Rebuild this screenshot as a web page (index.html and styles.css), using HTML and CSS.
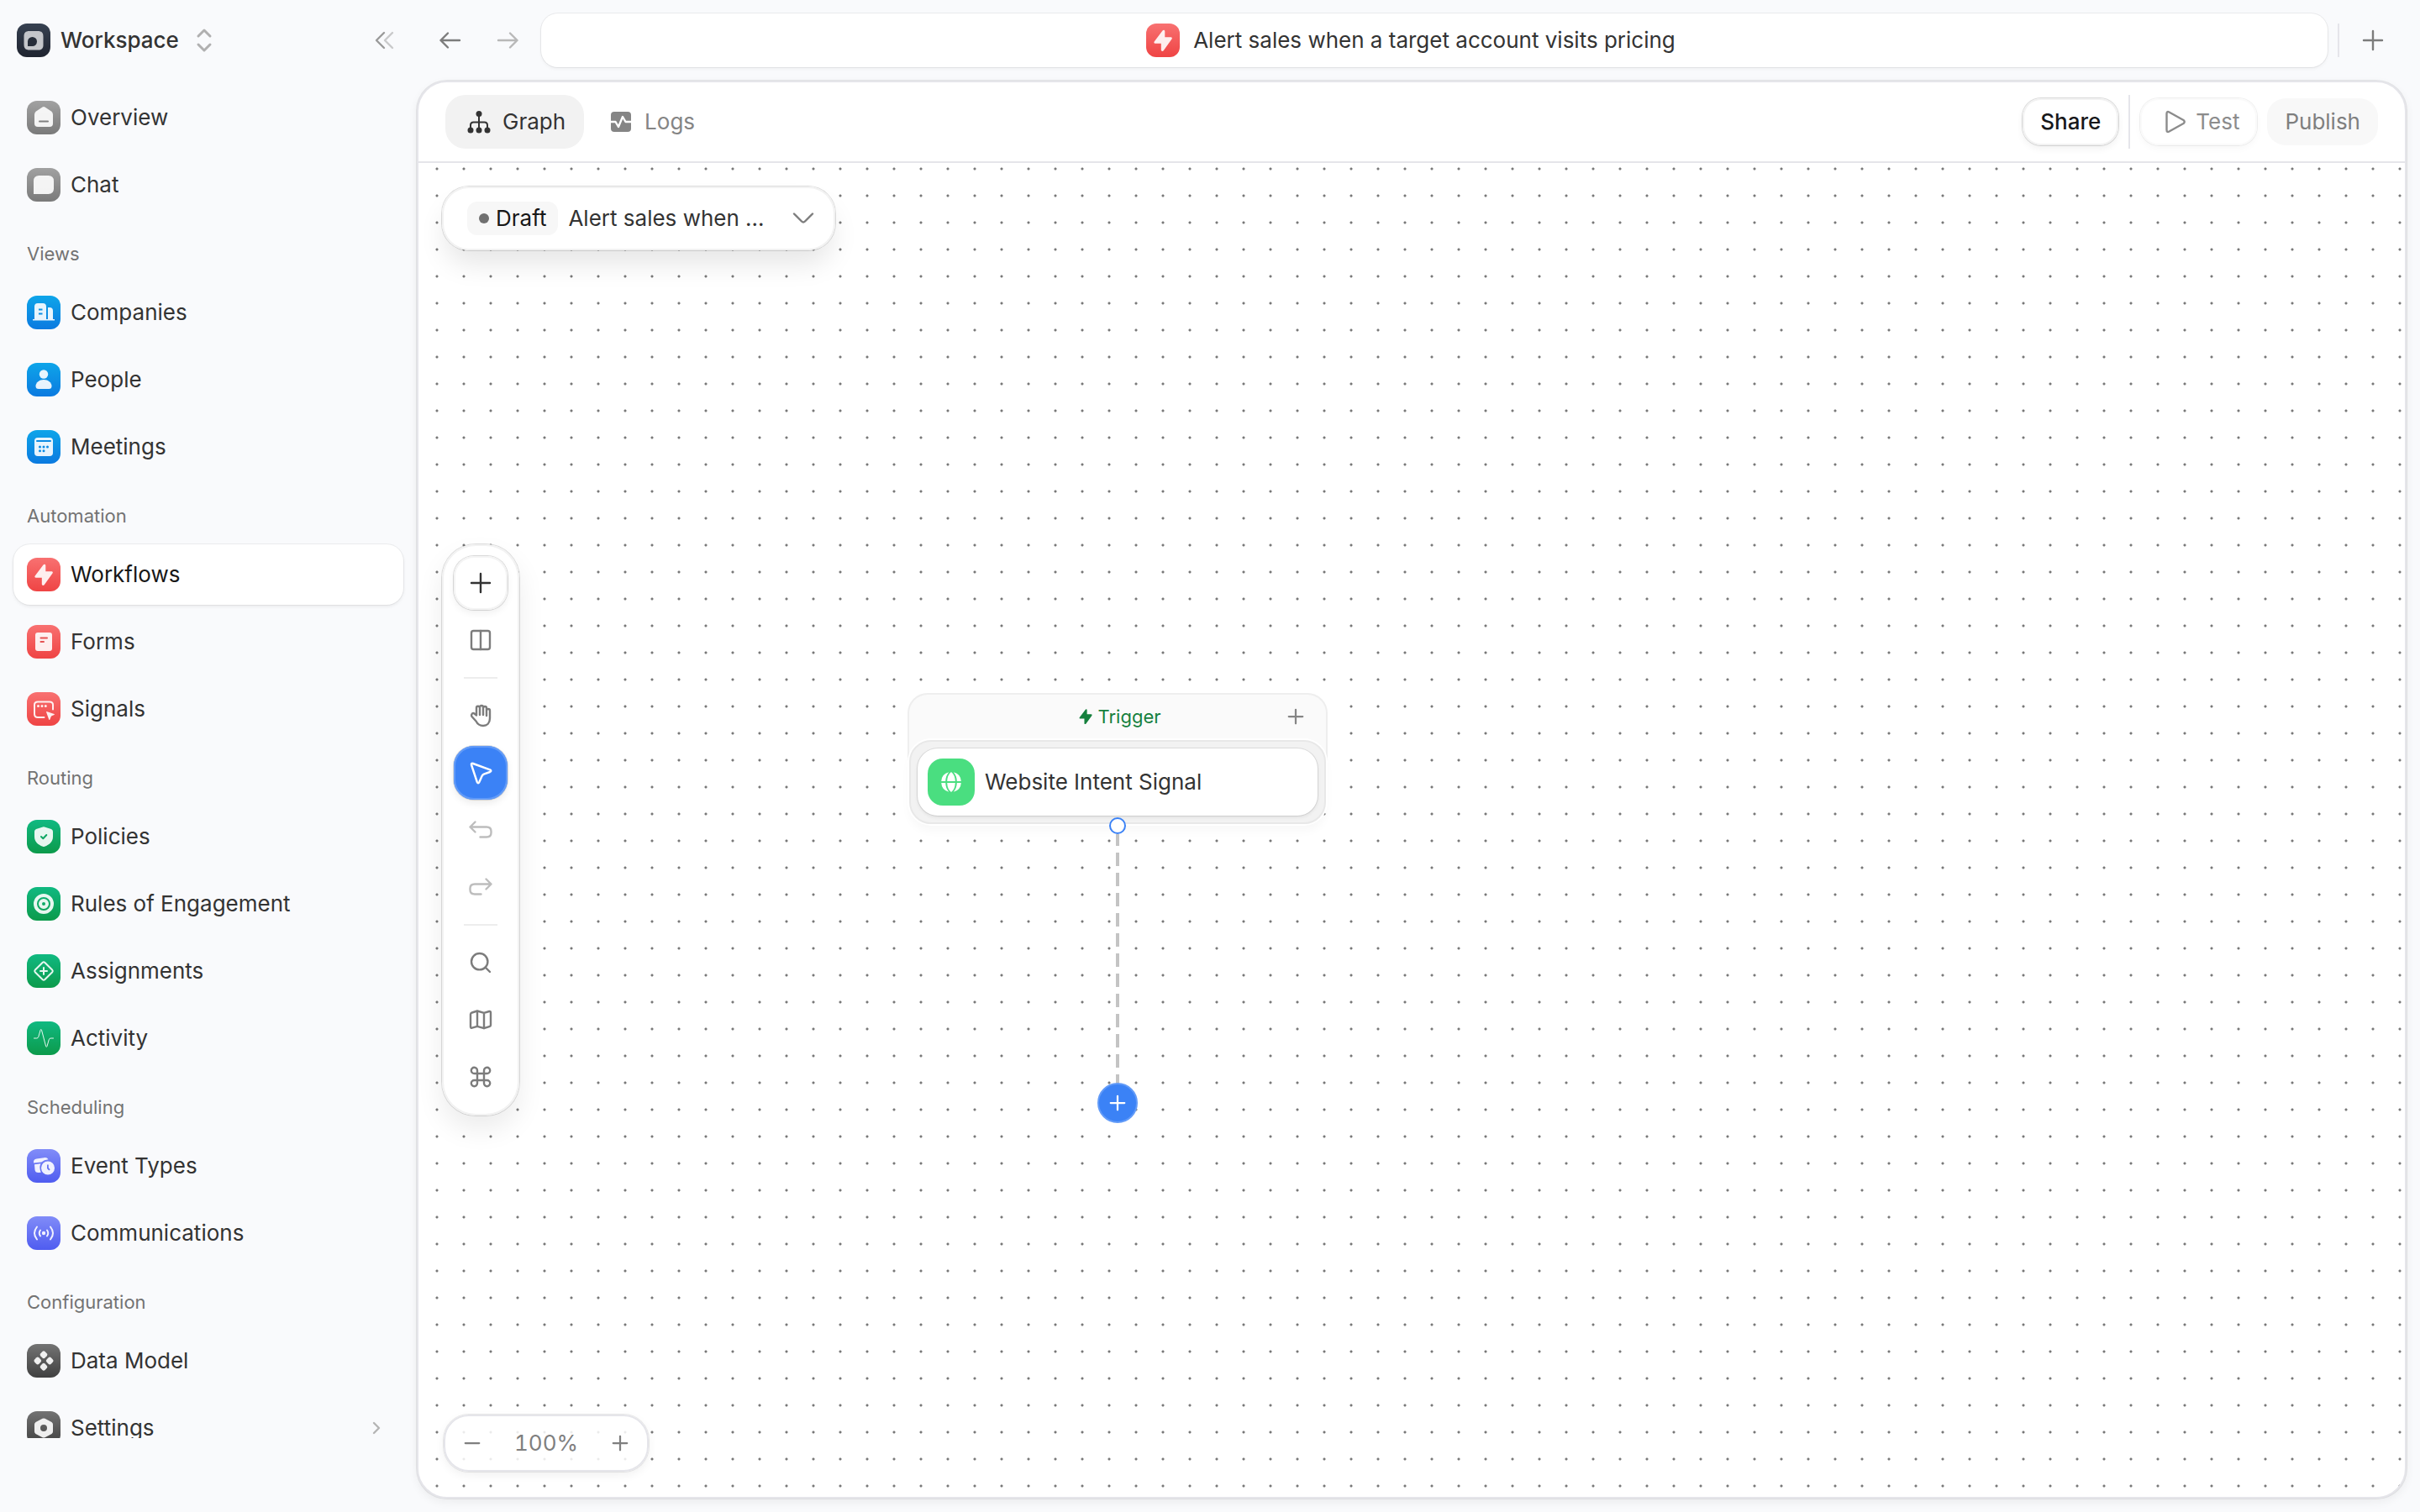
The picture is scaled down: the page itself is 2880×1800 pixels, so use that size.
FILE: index.html
```
<!DOCTYPE html>
<html lang="en">
<head>
<meta charset="UTF-8">
<meta name="viewport" content="width=device-width, initial-scale=1.0">
<title>Alert sales when a target account visits pricing</title>
<link rel="stylesheet" href="styles.css">
</head>
<body>
<svg class="sprite" aria-hidden="true">
  <symbol id="bolt" viewBox="0 0 40 40"><path d="M19.5 8.5 9.7 21.4c-.8 1.1-.2 2.3 1 2.3h7.1v7.6c0 1.8 1.9 2.3 2.9 1L30.500 18.600c.8-1.100.2-2.400-1-2.400h-7.200V9.400c0-1.900-1.800-2.300-2.800-.9z"/></symbol>
  <symbol id="plus" viewBox="0 0 32 32"><path d="M16 5v22M5 16h22"/></symbol>
</svg>

<div class="app">
  <aside class="sidebar">
    <div class="workspace">
      <button class="workspace-switch">
        <svg class="tile dark" viewBox="0 0 40 40"><path class="logo-face" d="M15 9h10c4.500 0 6.500 2 6.500 6.500v10c0 4-2 6-6 6H15c-4.500 0-6.500-2-6.500-6.500V15c0-4 2-6 6.500-6z"/><path class="logo-dot" d="M13 27v-5.500a5.500 5.500 0 1 1 5.500 5.500z"/></svg>
        <span>Workspace</span>
        <svg class="updown" viewBox="0 0 24 32"><path d="m5 11 7-7 7 7M5 21l7 7 7-7"/></svg>
      </button>
      <button class="collapse" aria-label="Collapse sidebar"><svg class="icon" viewBox="0 0 32 32"><path d="m15 7-9 9 9 9"/><path class="faint" d="m25 7-9 9 9 9"/></svg></button>
    </div>
    <nav class="nav">
      <a href="#"><svg class="tile gray" viewBox="0 0 40 40"><path d="M18.500 7.500q1.500-1 3 0l7.500 5q2 1.500 2 4V27q0 4-4 4H13q-4 0-4-4V16.500q0-2.500 2-4z"/><path class="cut" d="M15 24.500h10"/></svg>Overview</a>
      <a href="#"><svg class="tile gray" viewBox="0 0 40 40"><path d="M8 31V15.500Q8 9 14.500 9h11Q32 9 32 15.500v9Q32 31 25.500 31z"/></svg>Chat</a>
      <h2>Views</h2>
      <a href="#"><svg class="tile blue" viewBox="0 0 40 40"><path fill-rule="evenodd" d="M7 28h2V13q0-4 4-4h6q4 0 4 4v15h2V14h2q4 0 4 4v10h2v1.500H7zM14 15.500v2h4.500v-2zm0 5v2h4.500v-2z"/></svg>Companies</a>
      <a href="#"><svg class="tile blue" viewBox="0 0 40 40"><circle cx="20" cy="13.500" r="5.200"/><path d="M20 20c5 0 9.500 3.500 9.500 7.500 0 2.500-1 3.500-3.500 3.500H14c-2.500 0-3.500-1-3.500-3.500 0-4 4.500-7.500 9.500-7.500z"/></svg>People</a>
      <a href="#"><svg class="tile blue" viewBox="0 0 40 40"><rect x="9" y="9" width="22" height="22" rx="4"/><path class="cut" d="M12 13h16"/><path class="cut dots" d="M15.500 20h0M20 20h0M24.500 20h0M15.500 24.800h0M20 24.800h0"/></svg>Meetings</a>
      <h2>Automation</h2>
      <a href="#" class="active"><svg class="tile red"><use href="#bolt"/></svg>Workflows</a>
      <a href="#"><svg class="tile red" viewBox="0 0 40 40"><rect x="10" y="9" width="20" height="22" rx="3"/><path class="cut" d="M16.500 15.500h7.500M16.500 20h3.500"/></svg>Forms</a>
      <a href="#"><svg class="tile red" viewBox="0 0 40 40"><path class="line" d="M20.500 30H13q-4 0-4-4V15q0-3.500 4-3.500h14q4 0 4 3.500v5.500"/><path class="line dots" d="M13.500 16.500h0M18 16.500h0M22.300 16.500h0"/><path d="m23.500 23 9 3q1 .5 0 1L29 28.500 27.400 32.400q-.6 1-1.200 0L23 23.600z"/></svg>Signals</a>
      <h2>Routing</h2>
      <a href="#"><svg class="tile green" viewBox="0 0 40 40"><path d="m19 8.500q1-.4 2 0l8 2.500q2 .8 2 3v6c0 6-4 9.500-10 11.800q-1 .4-2 0C13 29.500 9 26 9 20v-6q0-2.200 2-3z"/><path class="cut" d="m17 20 2.300 2.200 4-4.200"/></svg>Policies</a>
      <a href="#"><svg class="tile green" viewBox="0 0 40 40"><path fill-rule="evenodd" d="M20 8a12 12 0 1 1 0 24 12 12 0 0 1 0-24zm0 4a8 8 0 1 0 0 16 8 8 0 0 0 0-16zm0 2a6 6 0 1 1 0 12 6 6 0 0 1 0-12zm0 4a2 2 0 1 0 0 4 2 2 0 0 0 0-4z"/></svg>Rules of Engagement</a>
      <a href="#"><svg class="tile green" viewBox="0 0 40 40"><path class="line" d="m18.800 9.700q1.200-1 2.400 0l9.100 9.100q1 1.200 0 2.400l-9.100 9.100q-1.200 1-2.400 0l-9.100-9.100q-1-1.200 0-2.400zM20 16v8M16 20h8"/></svg>Assignments</a>
      <a href="#"><svg class="tile green" viewBox="0 0 40 40"><path class="line thin" d="M8.500 20h3q1.800 0 2.300-1.700l2.300-8q.7-1.700 1.400 0L22.600 29.500q.7 1.800 1.400 0l2.200-7.700q.5-1.800 2.300-1.800h3"/></svg>Activity</a>
      <h2>Scheduling</h2>
      <a href="#"><svg class="tile indigo" viewBox="0 0 40 40"><path d="M8 16.500q-.5-4.500 3.500-5l9-1.300q3.500-.5 5 2-5 .3-8.200 3.300z"/><path d="m9 18.300 7.500-1q-2.300 4.700.3 10.500l-3 .2q-4 0-4.300-3.500z"/><path fill-rule="evenodd" d="M25 14.500a8 8 0 1 1 0 16 8 8 0 0 1 0-16zm-1 4v4.500l2.300 2.500 1.400-1.300-1.900-2v-3.700z"/></svg>Event Types</a>
      <a href="#"><svg class="tile indigo" viewBox="0 0 40 40"><circle cx="20" cy="20" r="2.200"/><path class="line" d="M16 16.500q-2.500 3.500 0 7M24 16.500q2.500 3.500 0 7M12 12.500q-6 7.500 0 15M28 12.500q6 7.500 0 15"/></svg>Communications</a>
      <h2>Configuration</h2>
      <a href="#"><svg class="tile charcoal" viewBox="0 0 40 40"><rect id="gem" x="-3.700" y="-3.700" width="7.400" height="7.400" rx="2.200" transform="translate(20 12.800) rotate(45)"/><use href="#gem" y="14.400"/><use href="#gem" x="-7.200" y="7.200"/><use href="#gem" x="7.200" y="7.200"/></svg>Data Model</a>
      <a href="#"><svg class="tile charcoal" viewBox="0 0 40 40"><path fill-rule="evenodd" d="M18.500 8.800q1.500-.8 3 0l8 4.200q1.500 1 1.500 2.700v8.600q0 1.700-1.500 2.700l-8 4.200q-1.500.8-3 0l-8-4.200Q9 26 9 24.300v-8.600q0-1.700 1.500-2.700zM20 16a4 4 0 1 0 0 8 4 4 0 0 0 0-8z"/></svg>Settings
        <svg class="chevron" viewBox="0 0 16 16"><path d="m5 2 6 6-6 6"/></svg></a>
    </nav>
  </aside>

  <div class="main">
    <header class="topbar">
      <button class="nav-btn" aria-label="Back"><svg class="icon" viewBox="0 0 32 32"><path d="M13 7.500 4.500 16l8.500 8.500M4.500 16H27"/></svg></button>
      <button class="nav-btn disabled" aria-label="Forward"><svg class="icon" viewBox="0 0 32 32"><path d="m19 7.500 8.500 8.500-8.500 8.500M27.500 16H5"/></svg></button>
      <div class="tab">
        <svg class="tile red"><use href="#bolt"/></svg>
        <span>Alert sales when a target account visits pricing</span>
      </div>
      <span class="tab-divider"></span>
      <button class="nav-btn" aria-label="New tab"><svg class="icon"><use href="#plus"/></svg></button>
    </header>

    <main class="panel">
      <div class="toolbar">
        <button class="view-btn selected"><svg class="icon solid" viewBox="0 0 32 32"><circle cx="16" cy="6.500" r="3.500"/><circle cx="6" cy="26" r="3.500"/><circle cx="16" cy="26" r="3.500"/><circle cx="26" cy="26" r="3.500"/><path class="line" d="M16 6v20M6 26v-6q0-3.500 3.500-3.500h13q3.500 0 3.500 3.500v6"/></svg>Graph</button>
        <button class="view-btn"><svg class="icon solid" viewBox="0 0 32 32"><rect x="4" y="4" width="24" height="24" rx="4"/><path class="pulse" d="M4 16h5.500l3.500 6 5-12 3.500 6H28"/></svg>Logs</button>
        <div class="actions">
          <button class="btn share">Share</button>
          <span class="rule"></span>
          <button class="btn test" disabled><svg class="icon" viewBox="0 0 32 32"><path d="M5.500 6.500v19q0 3.500 3 2l17-9.500q2.500-2 0-4l-17-9.500q-3-1.500-3 2z"/></svg>Test</button>
          <button class="btn publish" disabled>Publish</button>
        </div>
      </div>

      <div class="canvas">
        <button class="version">
          <span class="badge">Draft</span>
          <span class="version-name">Alert sales when ...</span>
          <svg class="icon" viewBox="0 0 32 32"><path d="m5 10.500 9 9q2 2 4 0l9-9"/></svg>
        </button>

        <div class="tools">
          <button class="tool add" aria-label="Add"><svg class="icon"><use href="#plus"/></svg></button>
          <button class="tool" aria-label="Panels"><svg class="icon" viewBox="0 0 32 32"><rect x="5" y="5" width="22" height="22" rx="2.500"/><path d="M16 5v22"/></svg></button>
          <hr>
          <button class="tool" aria-label="Pan"><svg class="icon" viewBox="0 0 32 32"><path d="M11 15V7a2 2 0 0 1 4-.5V15M15 7V6a2 2 0 0 1 4 0v9M19 7a2 2 0 0 1 4 0v9M23 10a2 2 0 0 1 4 0v9c0 6-3.500 9-8 9-4 0-6.500-1.500-8.500-5.500l-5.200-5.700C4.300 14.500 6.500 12 8.500 13.500L11 15.500"/></svg></button>
          <button class="tool current" aria-label="Select"><svg class="icon" viewBox="0 0 32 32"><path d="M5 6.500 11.800 27q1.200 2.500 2.600 0l3.100-7q.7-1.600 2.300-2.300l7.300-2.700q2.500-1.200 0-2.600L7 5Q4.500 4.200 5 6.500z"/></svg></button>
          <button class="tool disabled" aria-label="Undo"><svg class="icon" viewBox="0 0 32 32"><path d="M9.500 6.500 3.500 12.500l6 6M3.500 12.500H23q5.500 0 5.500 5v2q0 5-5.500 5h-7.500"/></svg></button>
          <button class="tool disabled" aria-label="Redo"><svg class="icon" viewBox="0 0 32 32"><path d="m22.500 6.500 6 6-6 6M28.500 12.500H9q-5.500 0-5.500 5v2q0 5 5.500 5h7.500"/></svg></button>
          <hr>
          <button class="tool" aria-label="Search"><svg class="icon" viewBox="0 0 32 32"><circle cx="14.700" cy="14.700" r="9.700"/><path d="m21.500 21.500 5.500 5.500"/></svg></button>
          <button class="tool" aria-label="Map"><svg class="icon" viewBox="0 0 32 32"><path d="m12 5.500-6.300 2Q4 8 4 9.500v14.700q0 2 1.800 1.500l6.200-1.900 8 2.400 6.300-2q1.700-.5 1.700-2V7.500q0-2-1.800-1.500L20 7.900zM12 5.500v18.300M20 7.900v18.300"/></svg></button>
          <button class="tool" aria-label="Shortcuts"><svg class="icon" viewBox="0 0 32 32"><path d="M12 8.500v15a3.600 3.600 0 1 1-3.500-3.500h15a3.600 3.600 0 1 1-3.500 3.500v-15a3.600 3.600 0 1 1 3.500 3.500h-15A3.600 3.600 0 1 1 12 8.500z"/></svg></button>
        </div>

        <section class="node">
          <div class="node-head">
            <svg class="icon-small"><use href="#bolt"/></svg>
            <span>Trigger</span>
            <button class="node-add" aria-label="Add trigger"><svg class="icon-mid"><use href="#plus"/></svg></button>
          </div>
          <div class="node-frame">
            <div class="node-card">
              <svg class="node-icon" viewBox="0 0 56 56"><path d="M25.200 16.300q-3.800 4.200-4 10.700h-5q.5-8.500 9-10.700zM16.200 29h5q.2 6.500 4 10.700-8.500-2.200-9-10.700zM28 16q4.500 3.500 4.800 11h-9.600Q23.500 19.500 28 16zM23.200 29h9.600q-.3 7.500-4.800 11-4.500-3.500-4.800-11zM30.800 16.300q8.500 2.200 9 10.700h-5q-.2-6.500-4-10.700zM34.800 29h5q-.5 8.500-9 10.700 3.800-4.200 4-10.700z"/></svg>
              Website Intent Signal
            </div>
          </div>
          <div class="connector">
            <span class="handle"></span>
            <svg class="edge" viewBox="0 0 4 300"><path d="M2 0v300"/></svg>
            <button class="add-step" aria-label="Add step"><svg class="icon-mid"><use href="#plus"/></svg></button>
          </div>
        </section>

        <div class="zoom">
          <button aria-label="Zoom out"><svg class="icon-mid" viewBox="0 0 32 32"><path d="M5 16h22"/></svg></button>
          <output>100%</output>
          <button aria-label="Zoom in"><svg class="icon-mid"><use href="#plus"/></svg></button>
        </div>
      </div>
    </main>
  </div>
</div>
</body>
</html>
```
FILE: styles.css
```
* {box-sizing:border-box;}
body {
  margin:0;
  background:#f9fafc;
  color:#333;
  font-family:Inter, sans-serif;
  font-size:26px;
  font-weight:400;
  line-height:40px;
}
button {
  display:flex;
  align-items:center;
  justify-content:center;
  padding:0;
  border:none;
  background:none;
  color:inherit;
  font:inherit;
  cursor:pointer;
}
a {color:inherit; text-decoration:none;}
svg {display:block; flex:none;}
.sprite {position:absolute; width:0; height:0;}

/* icons */
.icon {width:32px; height:32px; fill:none; stroke:currentColor; stroke-width:2.4; stroke-linecap:round; stroke-linejoin:round;}
.icon.solid {fill:currentColor; stroke:none;}
.icon .line {fill:none; stroke:currentColor; stroke-width:2;}
.icon .pulse {fill:none; stroke:#fff; stroke-width:2.4;}
.icon .faint {opacity:.5;}
.icon-mid {width:24px; height:24px; fill:none; stroke:currentColor; stroke-width:3; stroke-linecap:round;}
.icon-small {width:28px; height:28px; fill:currentColor;}
.tile {width:40px; height:40px; border-radius:12px; fill:rgba(255,255,255,.9);}
.tile .cut {fill:none; stroke-linecap:round; stroke-linejoin:round;}
.tile .line {fill:none; stroke:rgba(255,255,255,.9); stroke-linecap:round; stroke-linejoin:round;}
.gray {background:linear-gradient(#a1a1a1, #7a7a7a); stroke:#808080;}
.blue {background:linear-gradient(#0ea5e9, #0b7ae0); stroke:#0a8be4;}
.red {background:linear-gradient(#f87171, #ef4444); stroke:#e55353;}
.green {background:linear-gradient(#10b981, #0c9a4b); stroke:#0da763;}
.indigo {background:linear-gradient(#818cf8, #4f5cf0); stroke:#6470f3;}
.charcoal {background:linear-gradient(#737373, #404040); stroke:#555;}
.dark {background:linear-gradient(#374151, #1f2430);}
.tile path, .tile rect, .tile circle, .tile use {stroke-width:0;}
.tile .cut, .tile .line {stroke-width:2;}
.tile .cut.dots, .tile .line.dots {stroke-width:3;}
.tile .line.thin {stroke-width:1;}
.logo-face {fill:#c4c6ca;}
.logo-dot {fill:#262d39;}

.app {display:grid; grid-template-columns:496px 1fr; height:100vh;}

/* sidebar */
.sidebar {display:flex; flex-direction:column; min-height:0; padding-bottom:88px;}
.workspace {display:flex; align-items:center; justify-content:space-between; flex:none; height:96px; padding:0 22px 0 20px;}
.workspace-switch {gap:12px; font-weight:500;}
.updown {width:24px; height:32px; margin-left:6px; fill:none; stroke:#b0b0b0; stroke-width:3; stroke-linecap:round; stroke-linejoin:round;}
.collapse {width:32px; height:56px; color:#9a9a9a;}
.nav {display:flex; flex-direction:column; gap:8px; min-height:0; padding:8px 16px 0; overflow:hidden;}
.nav a {display:flex; align-items:center; flex:none; gap:12px; height:72px; padding:0 16px; border-radius:20px;}
.nav .active {background:#fff; color:#171717; box-shadow:0 0 0 1px rgba(0,0,0,.05), 0 2px 4px rgba(0,0,0,.07);}
.nav h2 {flex:none; height:64px; margin:0; padding:18px 16px 0; color:#737373; font-size:22px; font-weight:400; line-height:40px;}
.chevron {width:16px; height:16px; margin-left:auto; margin-right:8px; fill:none; stroke:#b5b5b5; stroke-width:2.4; stroke-linecap:round; stroke-linejoin:round;}

/* top bar */
.main {display:flex; flex-direction:column; min-width:0; padding:0 16px 16px 0;}
.topbar {display:flex; align-items:center; flex:none; gap:12px; height:96px; padding:0 12px;}
.nav-btn {width:56px; height:56px; color:#7c7c7c;}
.nav-btn.disabled {color:#b8b8b8;}
.tab {
  display:flex;
  flex:1;
  align-items:center;
  justify-content:center;
  gap:16px;
  height:64px;
  padding-right:56px;
  border-radius:20px;
  background:#fff;
  box-shadow:0 0 0 1px rgba(0,0,0,.06), 0 2px 4px rgba(0,0,0,.05);
}
.tab-divider {width:2px; height:40px; background:#e5e5ea;}

.panel {
  display:flex;
  flex:1;
  flex-direction:column;
  min-height:0;
  border:2px solid #e5e5ea;
  border-radius:36px;
  background:#fff;
  box-shadow:0 0 0 1px rgba(0,0,0,.08), 0 4px 12px rgba(0,0,0,.06);
  overflow:hidden;
}
.toolbar {display:flex; align-items:center; flex:none; gap:4px; height:96px; padding:0 32px; border-bottom:2px solid #e5e5ea;}
.view-btn {gap:12px; height:64px; padding:0 22px 0 24px; border-radius:24px; color:#858585;}
.view-btn.selected {background:#f2f2f2; color:#333;}
.actions {display:flex; align-items:center; gap:12px; margin-left:auto;}
.btn {height:56px; padding:0 21px; border-radius:22px;}
.share {color:#18181b; font-weight:500; box-shadow:inset 0 0 0 2px #f2f2f2, 0 0 0 1px rgba(0,0,0,.14), 0 4px 8px rgba(0,0,0,.06);}
.rule {width:2px; height:64px; background:#e5e5ea;}
.test {gap:8px; padding-left:26px; color:#8c8c8c; box-shadow:inset 0 0 0 2px #fafafa, 0 0 0 1px rgba(0,0,0,.06), 0 4px 8px rgba(0,0,0,.03);}
.publish {background:#f8f8f8; color:#7f7f7f;}

/* canvas */
.canvas {
  position:relative;
  display:flex;
  flex:1;
  flex-direction:column;
  align-items:flex-start;
  justify-content:center;
  padding:28px;
  background:radial-gradient(circle, #787878 1px, transparent 2px) 6px -9px / 32px 32px;
}
.version {
  position:absolute;
  top:28px;
  left:28px;
  gap:12px;
  width:468px;
  height:76px;
  padding:0 22px 0 30px;
  border-radius:32px;
  background:#fff;
  box-shadow:inset 0 0 0 2px #f2f2f2, 0 0 0 1px rgba(0,0,0,.13), 0 20px 32px -4px rgba(0,0,0,.1);
}
.badge {display:flex; align-items:center; gap:8px; height:40px; padding:0 14px; border-radius:12px; background:#f7f7f7; color:#171717;}
.badge::before {content:""; width:12px; height:12px; border-radius:50%; background:#707070;}
.version-name {flex:1; text-align:left; white-space:nowrap;}
.version .icon {color:#7c7c7c;}

.tools {
  display:flex;
  flex-direction:column;
  gap:4px;
  width:92px;
  padding:14px;
  border-radius:40px;
  background:#fff;
  box-shadow:inset 0 0 0 2px #f2f2f2, 0 0 0 1px rgba(0,0,0,.13), 0 16px 32px rgba(0,0,0,.08);
}
.tools hr {width:40px; height:2px; margin:8px auto; border:none; background:#ededed;}
.tool {width:64px; height:64px; border-radius:24px; color:#7c7c7c;}
.tool.disabled {color:#bdbdbd;}
.tool.add {color:#333; box-shadow:inset 0 0 0 2px #f4f4f4, 0 0 0 1px rgba(0,0,0,.14), 0 4px 8px rgba(0,0,0,.06);}
.tool.current {background:#3b82f6; color:#fff; box-shadow:inset 0 0 0 2px #629bf8, 0 0 0 1px rgba(0,0,0,.12), 0 4px 8px rgba(0,0,0,.08);}

.node {position:absolute; top:631px; left:582px; width:500px;}
.node-head {
  display:flex;
  align-items:center;
  justify-content:center;
  position:relative;
  height:90px;
  padding-bottom:36px;
  border:2px solid #eee;
  border-bottom:none;
  border-radius:24px 24px 0 0;
  background:#fafafa;
  color:#15803d;
  font-size:22px;
}
.node-add {position:absolute; top:6px; right:16px; width:40px; height:40px; color:#858585;}
.node-frame {
  position:relative;
  margin:-34px 2px 0;
  padding:8px;
  border:2px solid #e8e8e8;
  border-radius:26px;
  background:#f2f2f2;
  box-shadow:0 0 0 2px #fff, 0 8px 12px rgba(0,0,0,.03);
}
.node-card {
  display:flex;
  align-items:center;
  gap:12px;
  height:80px;
  padding:0 12px;
  border-radius:24px;
  background:#fff;
  box-shadow:0 0 0 1px rgba(0,0,0,.09), 0 2px 4px rgba(0,0,0,.08);
}
.node-icon {width:56px; height:56px; border-radius:18px; background:#4ade80; fill:#fff;}
.connector {display:flex; flex-direction:column; align-items:center; position:relative; margin-top:-8px;}
.handle {width:20px; height:20px; border:2px solid #3b82f6; border-radius:50%; background:#fff; z-index:1;}
.edge {width:4px; height:300px; fill:none; stroke:#c4c4c4; stroke-width:4; stroke-dasharray:16 8; stroke-dashoffset:2;}
.add-step {width:48px; height:48px; margin-top:-4px; border:2px solid #629bf8; border-radius:50%; background:#3b82f6; color:#fff;}

.zoom {
  position:absolute;
  bottom:30px;
  left:30px;
  display:flex;
  align-items:center;
  justify-content:space-between;
  width:244px;
  height:68px;
  padding:0 12px;
  border:2px solid #e5e5ea;
  border-radius:30px;
  background:rgba(255,255,255,.85);
  color:#7f7f7f;
  box-shadow:0 0 0 1px rgba(0,0,0,.08), 0 4px 12px rgba(0,0,0,.06);
}
.zoom button {width:40px; height:40px;}
.zoom output {font-variant-numeric:tabular-nums;}
```
